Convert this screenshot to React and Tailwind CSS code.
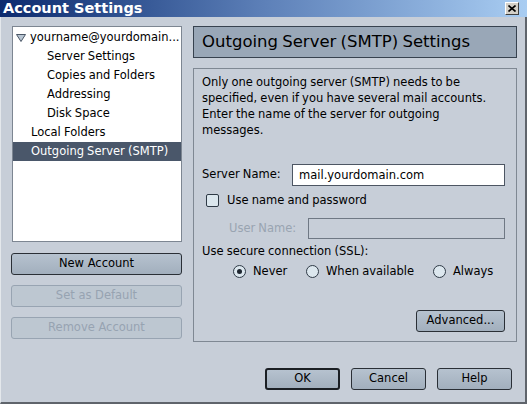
import React, { useState } from 'react';

const font = { fontFamily: '"DejaVu Sans", Verdana, sans-serif' };

const TreeItem = ({ label, indent, selected, arrow }) => (
    <div
        className={`h-[19px] flex items-center whitespace-nowrap ${indent} ${
            selected ? 'bg-[#4a576a] text-white' : 'text-black'
        }`}
    >
        {arrow && (
            <svg width="10" height="8" viewBox="0 0 10 8" className="mr-[4px] shrink-0">
                <path d="M0.5 0.5 L9.5 0.5 L5 7.5 Z" fill="#b9c6d3" stroke="#4a5666" strokeWidth="1" />
            </svg>
        )}
        {label}
    </div>
);

const Button = ({ children, disabled, strong, className = '' }) => (
    <button
        type="button"
        disabled={disabled}
        className={`h-[22px] rounded-[3px] flex items-center justify-center ${
            disabled
                ? 'border border-[#98a4b2] bg-[#bdc7d1] text-[#97a3b1]'
                : strong
                ? 'border-2 border-[#1b1f24] bg-gradient-to-b from-[#b6c2cf] to-[#a2afbd] text-black'
                : 'border border-[#2a2f36] bg-gradient-to-b from-[#b6c2cf] to-[#a2afbd] text-black'
        } ${className}`}
    >
        {children}
    </button>
);

const Radio = ({ checked, label }) => (
    <label className="flex items-center">
        <span className="w-[13px] h-[13px] rounded-full border border-[#2f3a46] bg-[#dce7ee] flex items-center justify-center mr-[7px]">
            {checked && <span className="w-[5px] h-[5px] rounded-full bg-[#1e2630]" />}
        </span>
        {label}
    </label>
);

const App = () => {
    const [server, setServer] = useState('mail.yourdomain.com');

    return (
        <div className="w-[527px] h-[404px] bg-[#c7ced8] flex flex-col text-[11.5px] [word-spacing:-0.5px] text-black overflow-hidden" style={font}>
            <div className="h-[17px] flex items-center justify-between pl-[3px] pr-[8px] bg-gradient-to-r from-[#0c2a6e] via-[#5d80b8] to-[#a9cdf2]">
                <span className="text-white font-bold text-[14.5px] [word-spacing:0px]">Account Settings</span>
                <span className="w-[14px] h-[13px] bg-[#d4d0c8] border border-t-white border-l-white border-r-[#404040] border-b-[#404040] flex items-center justify-center">
                    <svg width="8" height="7" viewBox="0 0 8 7">
                        <path d="M0.5 0.5 L7.5 6.5 M7.5 0.5 L0.5 6.5" stroke="#000" strokeWidth="1.6" />
                    </svg>
                </span>
            </div>

            <div className="flex-1 flex flex-col border-r-2 border-b-2 border-r-[#5f646b] border-b-[#5f646b] border-l border-l-[#e4e8ec]">
                <div className="flex pt-[9px] pl-[10px]">
                    {/* left column */}
                    <div className="w-[171px] flex flex-col">
                        <div className="ml-[1px] h-[216px] bg-white border border-[#7d8692] pt-[1px] overflow-hidden">
                            <TreeItem label="yourname@yourdomain..." indent="pl-[3px]" arrow />
                            <TreeItem label="Server Settings" indent="pl-[34px]" />
                            <TreeItem label="Copies and Folders" indent="pl-[34px]" />
                            <TreeItem label="Addressing" indent="pl-[34px]" />
                            <TreeItem label="Disk Space" indent="pl-[34px]" />
                            <TreeItem label="Local Folders" indent="pl-[18px]" />
                            <TreeItem label="Outgoing Server (SMTP)" indent="pl-[18px]" selected />
                        </div>
                        <div className="mt-[11px] flex flex-col gap-[10px]">
                            <Button>New Account</Button>
                            <Button disabled>Set as Default</Button>
                            <Button disabled>Remove Account</Button>
                        </div>
                    </div>

                    {/* right column */}
                    <div className="ml-[11px] w-[324px] flex flex-col">
                        <div className="h-[32px] bg-[#99a7b7] border border-[#37424f] flex items-center pl-[8px] text-[16.5px] [word-spacing:-1px]">
                            Outgoing Server (SMTP) Settings
                        </div>
                        <div className="mt-[10px] h-[274px] border border-[#7f8893] pl-[8px] pr-[11px] pt-[5px] flex flex-col">
                            <p className="leading-[16px] w-[290px]">
                                Only one outgoing server (SMTP) needs to be specified, even if you have several mail accounts. Enter the name of the server for outgoing messages.
                            </p>

                            <div className="mt-[26px] flex items-center">
                                <span className="w-[90px]">Server Name:</span>
                                <input
                                    className="flex-1 h-[22px] bg-white border border-[#4d5663] px-[6px] outline-none"
                                    value={server}
                                    onChange={(e) => setServer(e.target.value)}
                                />
                            </div>

                            <label className="mt-[7px] ml-[4px] flex items-center h-[15px]">
                                <span className="w-[13px] h-[13px] border border-[#2f3a46] bg-[#dce7ee] rounded-[2px] mr-[8px]" />
                                Use name and password
                            </label>

                            <div className="mt-[10px] flex items-center">
                                <span className="w-[106px] pl-[27px] text-[#99a4b1]">User Name:</span>
                                <input disabled className="flex-1 h-[21px] bg-[#c7ced8] border border-[#6f7884]" />
                            </div>

                            <div className="mt-[4px]">Use secure connection (SSL):</div>

                            <div className="mt-[3px] ml-[31px] flex items-center gap-[13px]">
                                <div className="w-[60px]"><Radio checked label="Never" /></div>
                                <div className="w-[114px]"><Radio label="When available" /></div>
                                <Radio label="Always" />
                            </div>

                            <div className="mt-[29px] flex justify-end">
                                <Button className="w-[89px]">Advanced...</Button>
                            </div>
                        </div>
                    </div>
                </div>

                <div className="mt-[26px] flex justify-end gap-[11px] pr-[13px]">
                    <Button strong className="w-[75px]">OK</Button>
                    <Button className="w-[75px]">Cancel</Button>
                    <Button className="w-[75px]">Help</Button>
                </div>
            </div>
        </div>
    );
};

export default App;
